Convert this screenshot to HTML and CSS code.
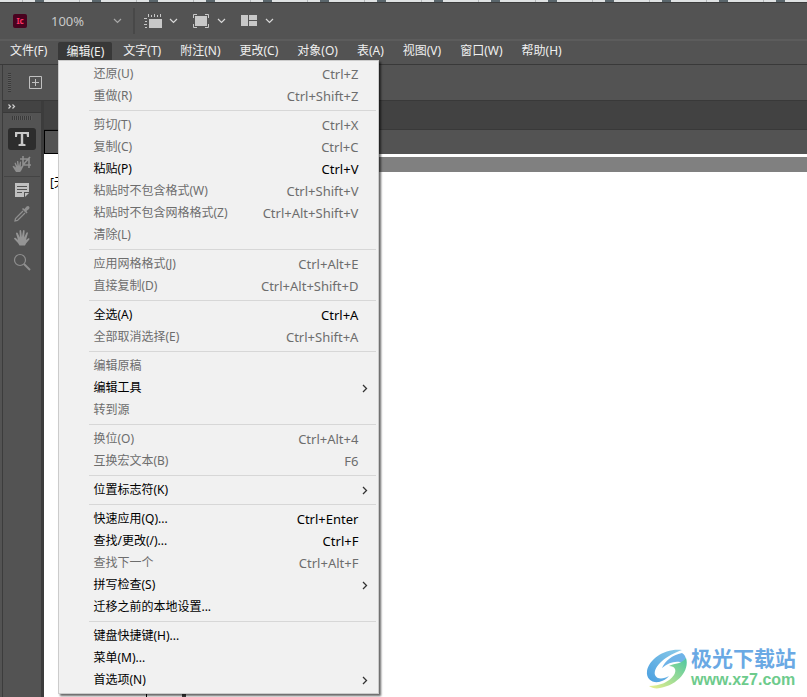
FILE: index.html
```
<!DOCTYPE html>
<html lang="zh-CN">
<head>
    <meta charset="UTF-8">
    <meta name="viewport" content="width=device-width, initial-scale=1.0">
    <title>InCopy</title>
    <link rel="stylesheet" href="styles.css">
</head>
<body>

    <div class="desktop-edge"></div>

    <!-- Application bar -->
    <header class="app-bar">
        <span class="app-logo">Ic</span>
        <button class="zoom-level" type="button">
            <span>100%</span>
            <svg class="chevron dim" viewBox="0 0 9 6"><path d="M1 1l3.500 3.500L8 1"/></svg>
        </button>
        <button class="view-button" type="button" aria-label="视图选项">
            <svg width="19" height="15" viewBox="0 0 19 15">
                <path fill="#c8c8c8" d="M5 5h13v9H5zM4 0h1v3H4zM7 1h1v2H7zM10 0h1v3h-1zM13 1h1v2h-1zM16 0h1v3h-1zM0 4h3v1H0zM1 7h2v1H1zM0 10h3v1H0zM1 13h2v1H1z"/>
            </svg>
            <svg class="chevron" viewBox="0 0 9 6"><path d="M1 1l3.500 3.500L8 1"/></svg>
        </button>
        <button class="view-button" type="button" aria-label="屏幕模式">
            <svg width="19" height="15" viewBox="0 0 19 15">
                <path fill="#c8c8c8" d="M3 2h12v10H3z"/>
                <path fill="none" stroke="#c8c8c8" d="M1.500 4V.5H5M13 .5h3.500V4M16.500 10v3.500H13M5 13.500H1.500V10"/>
            </svg>
            <svg class="chevron" viewBox="0 0 9 6"><path d="M1 1l3.500 3.500L8 1"/></svg>
        </button>
        <button class="view-button" type="button" aria-label="排列文档">
            <svg width="19" height="15" viewBox="0 0 19 15">
                <path fill="#c8c8c8" d="M1 1h7v11H1zM9 1h8v5H9zM9 7h8v5H9z"/>
            </svg>
            <svg class="chevron" viewBox="0 0 9 6"><path d="M1 1l3.500 3.500L8 1"/></svg>
        </button>
    </header>

    <!-- Menu bar -->
    <nav class="menu-bar">
        <button type="button">文件(F)</button>
        <div class="menu-holder">
            <button type="button" class="open" aria-expanded="true">编辑(E)</button>
            <div class="menu">
                <button type="button" disabled>还原(U)<kbd>Ctrl+Z</kbd></button>
                <button type="button" disabled>重做(R)<kbd>Ctrl+Shift+Z</kbd></button>
                <hr>
                <button type="button" disabled>剪切(T)<kbd>Ctrl+X</kbd></button>
                <button type="button" disabled>复制(C)<kbd>Ctrl+C</kbd></button>
                <button type="button">粘贴(P)<kbd>Ctrl+V</kbd></button>
                <button type="button" disabled>粘贴时不包含格式(W)<kbd>Ctrl+Shift+V</kbd></button>
                <button type="button" disabled>粘贴时不包含网格格式(Z)<kbd>Ctrl+Alt+Shift+V</kbd></button>
                <button type="button" disabled>清除(L)</button>
                <hr>
                <button type="button" disabled>应用网格格式(J)<kbd>Ctrl+Alt+E</kbd></button>
                <button type="button" disabled>直接复制(D)<kbd>Ctrl+Alt+Shift+D</kbd></button>
                <hr>
                <button type="button">全选(A)<kbd>Ctrl+A</kbd></button>
                <button type="button" disabled>全部取消选择(E)<kbd>Ctrl+Shift+A</kbd></button>
                <hr>
                <button type="button" disabled>编辑原稿</button>
                <button type="button" class="submenu">编辑工具<svg viewBox="0 0 6 9"><path d="M1 1l3.500 3.500L1 8"/></svg></button>
                <button type="button" disabled>转到源</button>
                <hr>
                <button type="button" disabled>换位(O)<kbd>Ctrl+Alt+4</kbd></button>
                <button type="button" disabled>互换宏文本(B)<kbd>F6</kbd></button>
                <hr>
                <button type="button" class="submenu">位置标志符(K)<svg viewBox="0 0 6 9"><path d="M1 1l3.500 3.500L1 8"/></svg></button>
                <hr>
                <button type="button">快速应用(Q)...<kbd>Ctrl+Enter</kbd></button>
                <button type="button">查找/更改(/)...<kbd>Ctrl+F</kbd></button>
                <button type="button" disabled>查找下一个<kbd>Ctrl+Alt+F</kbd></button>
                <button type="button" class="submenu">拼写检查(S)<svg viewBox="0 0 6 9"><path d="M1 1l3.500 3.500L1 8"/></svg></button>
                <button type="button">迁移之前的本地设置...</button>
                <hr>
                <button type="button">键盘快捷键(H)...</button>
                <button type="button">菜单(M)...</button>
                <button type="button" class="submenu">首选项(N)<svg viewBox="0 0 6 9"><path d="M1 1l3.500 3.500L1 8"/></svg></button>
            </div>
        </div>
        <button type="button">文字(T)</button>
        <button type="button">附注(N)</button>
        <button type="button">更改(C)</button>
        <button type="button">对象(O)</button>
        <button type="button">表(A)</button>
        <button type="button">视图(V)</button>
        <button type="button">窗口(W)</button>
        <button type="button">帮助(H)</button>
    </nav>

    <!-- Control bar -->
    <div class="control-bar">
        <span class="grip-vertical"></span>
        <button type="button" aria-label="新建">
            <svg width="13" height="13" viewBox="0 0 13 13"><path fill="none" stroke="#c0c0c0" d="M.5.5h12v12H.5zM6.500 3v7M3 6.500h7"/></svg>
        </button>
    </div>

    <div class="workspace">
        <!-- Tool panel -->
        <aside class="tools">
            <div class="tools-header">
                <svg width="8" height="5" viewBox="0 0 8 5"><path fill="none" stroke="#d0d0d0" stroke-width="1.200" d="M.5.5l2 2-2 2M4.500.5l2 2-2 2"/></svg>
            </div>
            <span class="grip-horizontal"></span>
            <button type="button" class="tool selected" aria-label="文字工具">
                <svg width="18" height="18" viewBox="0 0 18 18"><path fill="#c8c8c8" d="M2 2h14v5h-2l-.4-3H10.200v9.800l2.300.4V16h-7v-1.800l2.300-.4V4H4.400L4 7H2z"/></svg>
            </button>
            <button type="button" class="tool" aria-label="位置工具">
                <svg width="20" height="18" viewBox="0 0 20 18">
                    <path fill="none" stroke="#8f8f8f" stroke-width="1.600" d="M11 1v9h8M8 4h9v9M11 10l7-8"/>
                    <path fill="#8f8f8f" d="M4 17L.5 11.500l1-.8L4 12.500 2.500 8l1-.4L5.300 11 5 6h1.200l.8 5 1-4.500 1.100.2L8.800 12l2-2 .9.800L9 16l-1 1z"/>
                </svg>
            </button>
            <hr>
            <button type="button" class="tool" aria-label="附注工具">
                <svg width="18" height="18" viewBox="0 0 18 18">
                    <path fill="#c0c0c0" d="M2 2h14v9h-5v5H2z"/>
                    <path fill="#c0c0c0" d="M12 12h4l-4 4z"/>
                    <path stroke="#535353" d="M4 5.500h10M4 8.500h10M4 11.500h5"/>
                </svg>
            </button>
            <button type="button" class="tool" aria-label="吸管工具">
                <svg width="18" height="18" viewBox="0 0 18 18">
                    <path fill="none" stroke="#8f8f8f" stroke-width="1.300" d="M10 6l-7.500 7.500L2 16l2.500-.5L12 8"/>
                    <path fill="#8f8f8f" d="M9 4l1-1 1.500 1 2-2.500c2-1.500 4 .5 2.500 2.500l-2.500 2 1 1.500-1 1z"/>
                </svg>
            </button>
            <button type="button" class="tool" aria-label="抓手工具">
                <svg width="18" height="18" viewBox="0 0 18 18">
                    <path fill="#959595" d="M6.500 16.500L5 14 1 9.800c0-1 1-1.300 1.800-.7L5 11 3 4.500c0-1.200 1.300-1.400 1.700-.4L6.800 8.500 6.500 2c.1-1.200 1.500-1.200 1.700 0l.7 6L10 1.800c.3-1.100 1.600-.9 1.600.2l-.4 6.500 2.200-4.700c.5-1 1.700-.5 1.500.5L13 11l2-1.500c1-.5 1.800.2 1.300 1L13 14.500l-1 2z"/>
                </svg>
            </button>
            <button type="button" class="tool" aria-label="缩放工具">
                <svg width="18" height="18" viewBox="0 0 18 18">
                    <circle cx="7" cy="7" r="5.500" fill="none" stroke="#8f8f8f" stroke-width="1.200"/>
                    <path stroke="#8f8f8f" stroke-width="2" d="M11 11l6 6"/>
                </svg>
            </button>
        </aside>

        <!-- Document window -->
        <main class="document">
            <div class="tab-strip"></div>
            <div class="story-bar"><span class="story-box"></span></div>
            <div class="ruler"></div>
            <div class="page">
                <p>[无样式]</p>
                <span class="page-frame"></span>
            </div>
        </main>
    </div>

    <div class="watermark">
        <svg width="46" height="42" viewBox="0 0 46 42">
            <defs>
                <linearGradient id="blue" x1="0" y1="1" x2="1" y2="0">
                    <stop offset="0" stop-color="#4a9fe0"/>
                    <stop offset="1" stop-color="#8ccbe8"/>
                </linearGradient>
                <linearGradient id="green" x1="0" y1="1" x2="1" y2="0">
                    <stop offset="0" stop-color="#eaf08c"/>
                    <stop offset="1" stop-color="#4cc6a0"/>
                </linearGradient>
            </defs>
            <path fill="url(#blue)" d="M37 2C20 0 4 11 2 23c-1 8 5 12 12 11 4-1 8-3 10-6-5 3-12 4-14-1C8 18 22 7 37 2z"/>
            <path fill="#6fb3e8" d="M37 5C27 7 20 13 17 20c6-5 12-7 18-6 3 1 4 3 4 5 3-5 3-11-2-14z"/>
            <path fill="url(#green)" d="M41 10c4 12-8 27-26 30-4 1-8 0-11-2 11 0 20-4 25-11 3-5 1-9-5-9 6-3 13-2 17-8z"/>
        </svg>
        <div class="watermark-text">
            <strong>极光下载站</strong>
            <a href="#">www.xz7.com</a>
        </div>
    </div>

</body>
</html>
```
FILE: styles.css
```
* {
    box-sizing: border-box;
}

body {
    margin: 0;
    height: 100vh;
    overflow: hidden;
    display: flex;
    flex-direction: column;
    position: relative;
    background-color: #535353;
    font-family: "Noto Sans", "Noto Sans CJK SC", sans-serif;
    font-size: 12px;
    line-height: 22px;
}

button {
    margin: 0;
    padding: 0;
    border: none;
    background: none;
    color: inherit;
    font: inherit;
}

svg {
    display: block;
    flex-shrink: 0;
}

/* Sliver of the window behind */
.desktop-edge {
    flex-shrink: 0;
    height: 3px;
    background: repeating-linear-gradient(90deg, transparent 0 22px, #b4b8ba 22px 23px, transparent 23px 35px, #5a666c 35px 44px, transparent 44px 57px) #dfe2e3;
    border-bottom: 1px solid #3c3c3c;
}

/* Application bar */
.app-bar {
    flex-shrink: 0;
    display: flex;
    align-items: center;
    height: 38px;
    padding-left: 13px;
    border-bottom: 2px solid #5c5c5c;
    color: #c8c8c8;
}

.app-logo {
    width: 14px;
    height: 14px;
    border-radius: 2px;
    background-color: #49021f;
    color: #ff3366;
    font-size: 8px;
    font-weight: bold;
    line-height: 14px;
    text-align: center;
}

.zoom-level {
    display: flex;
    align-items: center;
    justify-content: space-between;
    width: 108px;
    height: 26px;
    padding: 0 11px 0 24px;
    border-right: 2px solid #484848;
    font-size: 13px;
}

.view-button {
    display: flex;
    align-items: center;
    gap: 6px;
    margin-left: 9px;
    padding-right: 5px;
}

.chevron {
    width: 9px;
    height: 6px;
    fill: none;
    stroke: #d8d8d8;
    stroke-width: 1.2;
}

.chevron.dim {
    stroke: #a8a8a8;
}

/* Menu bar */
.menu-bar {
    flex-shrink: 0;
    display: flex;
    gap: 3px;
    height: 24px;
    padding-left: 2px;
    border-bottom: 1px solid #393939;
    color: #f0f0f0;
}

.menu-bar > button,
.menu-holder > button {
    height: 19px;
    padding: 0 8px;
    line-height: 19px;
    white-space: nowrap;
}

.menu-holder {
    position: relative;
}

.menu-holder > .open {
    background-color: #383838;
    border-radius: 2px 2px 0 0;
}

.menu {
    position: absolute;
    top: 19px;
    left: 0;
    z-index: 2;
    display: flex;
    flex-direction: column;
    width: 321px;
    padding: 2px;
    border: 1px solid #cccccc;
    background-color: #f1f1f1;
    box-shadow: 2px 2px 2px rgba(0, 0, 0, 0.6);
    color: #000000;
}

.menu button {
    display: flex;
    align-items: center;
    justify-content: space-between;
    height: 22px;
    padding: 0 18px 0 32px;
    white-space: nowrap;
}

.menu button:disabled {
    color: #6d6d6d;
}

.menu button.submenu {
    padding-right: 8px;
}

.menu kbd {
    font-family: inherit;
    font-size: 13px;
}

.menu svg {
    width: 6px;
    height: 9px;
    fill: none;
    stroke: #333333;
    stroke-width: 1.3;
}

.menu hr {
    width: auto;
    height: 1px;
    margin: 3px 0 3px 28px;
    border: none;
    background-color: #d7d7d7;
}

/* Control bar */
.control-bar {
    flex-shrink: 0;
    display: flex;
    align-items: center;
    gap: 18px;
    height: 36px;
    margin-left: 2px;
    padding-left: 5px;
    border-left: 1px solid #3c3c3c;
    border-bottom: 1px solid #393939;
}

.grip-vertical {
    width: 3px;
    height: 19px;
    background: repeating-linear-gradient(#3a3a3a 0 1px, #5c5c5c 1px 2px);
}

/* Workspace */
.workspace {
    flex: 1;
    display: flex;
    min-height: 0;
}

.tools {
    flex-shrink: 0;
    display: flex;
    flex-direction: column;
    align-items: center;
    width: 42px;
    margin-left: 2px;
    border-left: 1px solid #3c3c3c;
    border-right: 3px solid #3c3c3c;
}

.tools-header {
    align-self: stretch;
    display: flex;
    align-items: center;
    height: 12px;
    padding-left: 5px;
    background-color: #434343;
    border-bottom: 1px solid #393939;
}

.grip-horizontal {
    width: 20px;
    height: 4px;
    margin: 3px 0 8px;
    background: repeating-linear-gradient(90deg, #3a3a3a 0 1px, #5c5c5c 1px 2px);
}

.tool {
    display: flex;
    align-items: center;
    justify-content: center;
    width: 28px;
    height: 24px;
    flex-shrink: 0;
}

.tool.selected {
    height: 22px;
    margin-bottom: 2px;
    border-radius: 3px;
    background-color: #2d2d2d;
}

.tools hr {
    width: 36px;
    height: 1px;
    margin: 0 0 1px;
    border: none;
    background-color: #444444;
}

.document {
    flex: 1;
    display: flex;
    flex-direction: column;
    min-width: 0;
    background-color: #ffffff;
}

.tab-strip {
    flex-shrink: 0;
    height: 29px;
    background-color: #424242;
    border-bottom: 1px solid #393939;
}

.story-bar {
    flex-shrink: 0;
    height: 24px;
    background-color: #535353;
}

.story-box {
    display: block;
    width: 200px;
    height: 24px;
    border: 1px solid #000000;
}

.ruler {
    flex-shrink: 0;
    height: 18px;
    margin-left: 200px;
    border-top: 3px solid #ffffff;
    background-color: #808080;
}

.page {
    flex: 1;
    display: flex;
    flex-direction: column;
    justify-content: space-between;
    color: #000000;
}

.page p {
    margin: 0;
    padding-left: 6px;
}

.page-frame {
    width: 40px;
    height: 8px;
    margin-left: 102px;
    border-left: 1px solid #000000;
    border-right: 4px solid #444444;
}

/* Watermark */
.watermark {
    position: absolute;
    right: 11px;
    bottom: 6px;
    display: flex;
    align-items: center;
}

.watermark-text {
    display: flex;
    flex-direction: column;
    line-height: 22px;
}

.watermark-text strong {
    color: #6aa9e4;
    font-size: 21px;
}

.watermark-text a {
    color: #6dcb8c;
    font-family: "Liberation Sans", Arial, sans-serif;
    font-size: 16px;
    font-weight: bold;
    text-decoration: none;
}
```
